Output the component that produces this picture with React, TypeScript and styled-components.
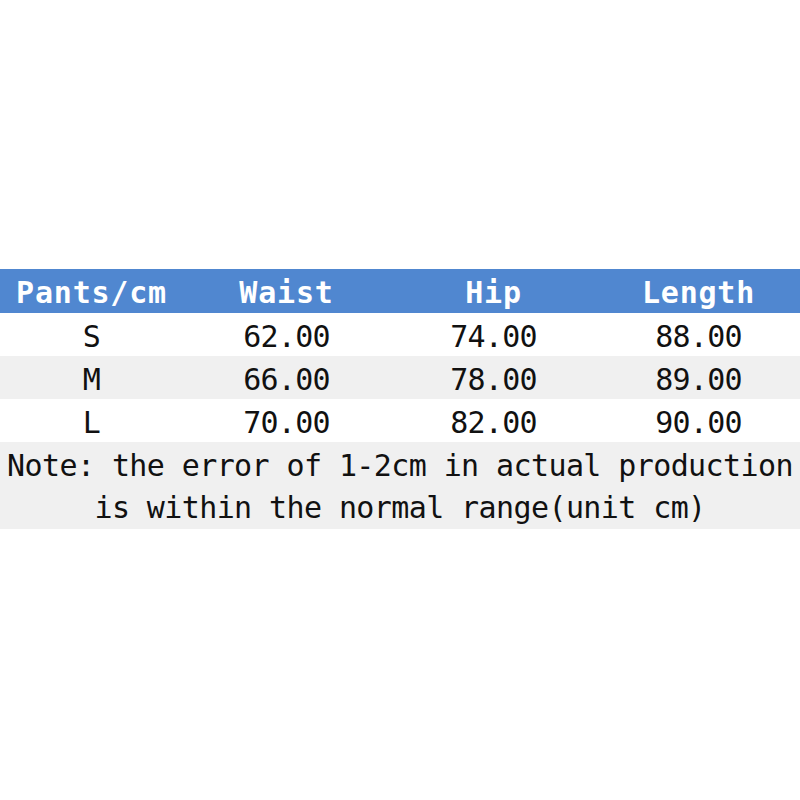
import styled, { createGlobalStyle } from "styled-components";

const GlobalStyle = createGlobalStyle`
  body {
    margin: 0;
    background: #ffffff;
  }
`;

const rows = [
  { size: "S", waist: "62.00", hip: "74.00", length: "88.00" },
  { size: "M", waist: "66.00", hip: "78.00", length: "89.00" },
  { size: "L", waist: "70.00", hip: "82.00", length: "90.00" },
];

const Page = styled.div`
  width: 800px;
  height: 800px;
  padding-top: 269px;
  box-sizing: border-box;
  font-family: "DejaVu Sans Mono", "Liberation Mono", monospace;
`;

const Row = styled.div<{ $shade?: boolean }>`
  display: grid;
  grid-template-columns: 183px 207px 207px 203px;
  height: 43px;
  align-items: center;
  background: ${({ $shade }) => ($shade ? "#f0f0f0" : "#ffffff")};
`;

const HeaderRow = styled(Row)`
  height: 44px;
  background: #5087d0;
`;

const HeadCell = styled.div`
  text-align: center;
  color: #ffffff;
  font-weight: bold;
  font-size: 30px;
  letter-spacing: 0.8px;
  padding-top: 2px;
`;

const Cell = styled.div`
  text-align: center;
  color: #111111;
  font-size: 30px;
  letter-spacing: -0.8px;
  padding-top: 4px;
`;

const Note = styled.div`
  background: #f0f0f0;
  height: 87px;
  padding-top: 3px;
  box-sizing: border-box;
  display: flex;
  flex-direction: column;
  align-items: center;
  justify-content: center;
  color: #111111;
  font-size: 30px;
  letter-spacing: -0.6px;
  line-height: 42px;
  white-space: pre;
`;

export default function App() {
  return (
    <>
      <GlobalStyle />
      <Page>
        <HeaderRow>
          <HeadCell>Pants/cm</HeadCell>
          <HeadCell>Waist</HeadCell>
          <HeadCell>Hip</HeadCell>
          <HeadCell>Length</HeadCell>
        </HeaderRow>
        {rows.map((r, i) => (
          <Row key={r.size} $shade={i % 2 === 1}>
            <Cell>{r.size}</Cell>
            <Cell>{r.waist}</Cell>
            <Cell>{r.hip}</Cell>
            <Cell>{r.length}</Cell>
          </Row>
        ))}
        <Note>
          <span>Note: the error of 1-2cm in actual production</span>
          <span>is within the normal range(unit cm)</span>
        </Note>
      </Page>
    </>
  );
}
